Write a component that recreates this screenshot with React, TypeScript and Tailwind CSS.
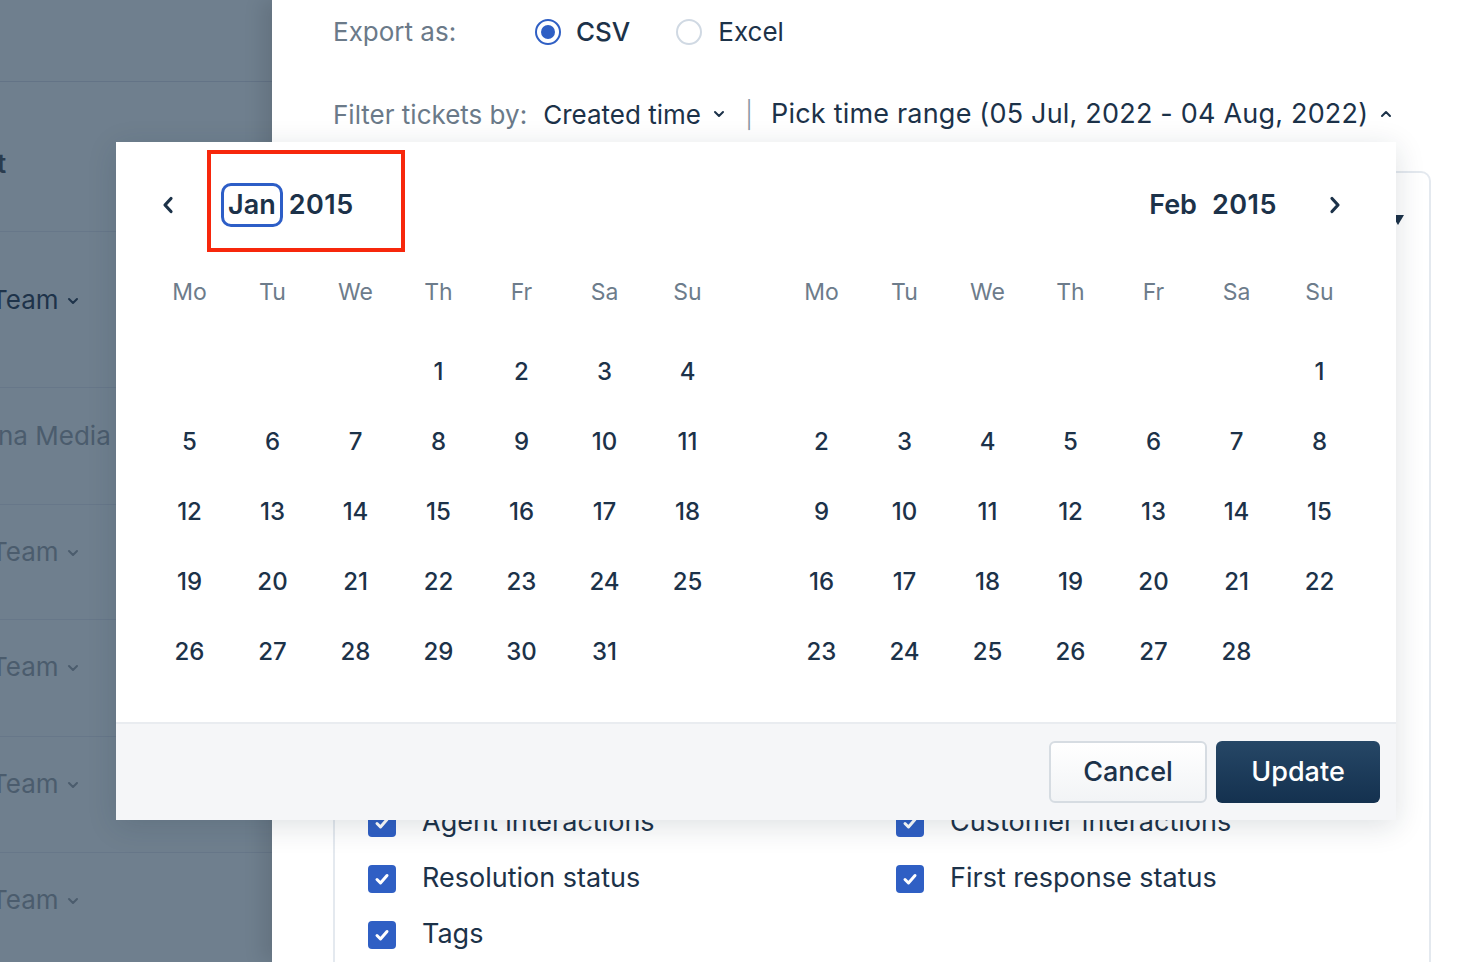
import React from 'react';

const janDays: (number | null)[] = [null, null, null, ...Array.from({ length: 31 }, (_, i) => i + 1)];
const febDays: (number | null)[] = [null, null, null, null, null, null, ...Array.from({ length: 28 }, (_, i) => i + 1)];
const weekdays = ['Mo', 'Tu', 'We', 'Th', 'Fr', 'Sa', 'Su'];

const ChevronLeft = () => (
  <svg width="12" height="18" viewBox="0 0 12 18" fill="none">
    <path d="M9 2.5 L3 9 L9 15.5" stroke="#1c3249" strokeWidth="3.2" strokeLinecap="round" strokeLinejoin="round" />
  </svg>
);

const ChevronRight = () => (
  <svg width="12" height="18" viewBox="0 0 12 18" fill="none">
    <path d="M3 2.5 L9 9 L3 15.5" stroke="#1c3249" strokeWidth="3.2" strokeLinecap="round" strokeLinejoin="round" />
  </svg>
);

const SmallChevron = ({ up = false, color = '#1c3249' }: { up?: boolean; color?: string }) => (
  <svg width="12" height="8" viewBox="0 0 12 8" fill="none">
    <path d={up ? 'M2 6 L6 2 L10 6' : 'M2 2 L6 6 L10 2'} stroke={color} strokeWidth="2" strokeLinecap="round" strokeLinejoin="round" />
  </svg>
);

const Checkbox = () => (
  <div className="flex h-[28px] w-[28px] items-center justify-center rounded-[4px] bg-[#2f5fc4]">
    <svg width="16" height="14" viewBox="0 0 16 14" fill="none">
      <path d="M3 7.5 L6.5 11 L13 3.5" stroke="white" strokeWidth="3" strokeLinecap="round" strokeLinejoin="round" />
    </svg>
  </div>
);

const MonthGrid = ({ days }: { days: (number | null)[] }) => (
  <div className="w-[581px]">
    <div className="mt-[48px] grid h-[34px] grid-cols-7 items-center">
      {weekdays.map((d) => (
        <div key={d} className="text-center text-[23px] text-[#6d7c8b]">{d}</div>
      ))}
    </div>
    <div className="mt-[28px] grid grid-cols-7">
      {days.map((d, i) => (
        <div key={i} className="flex h-[70px] items-center justify-center text-[24px] font-medium text-[#1c3249]">
          {d ?? ''}
        </div>
      ))}
    </div>
  </div>
);

export default function App() {
  return (
    <div className="relative flex h-[962px] w-[1472px] overflow-hidden bg-white font-['Inter',sans-serif]">
      {/* dimmed page on the left */}
      <div className="flex w-[272px] shrink-0 flex-col overflow-hidden bg-[#6f7f8e] text-[26px]">
        <div className="h-[82px] border-b border-[#637386]" />
        <div className="h-[150px] border-b border-[#677789] pt-[65px] font-semibold leading-[34px] text-[#2a3c4f]">
          <span className="-ml-[3px]">t</span>
        </div>
        <div className="flex h-[156px] items-start gap-2 border-b border-[#677789] pt-[51px] leading-[34px] text-[#1e334a]">
          <span className="-ml-[9px]">Team</span>
          <span className="mt-[14px]"><SmallChevron color="#1e334a" /></span>
        </div>
        <div className="h-[117px] border-b border-[#677789] pt-[31px] leading-[34px] text-[#4b5c6d]">
          <span className="-ml-[2px]">na Media</span>
        </div>
        {[115, 117, 116, 109].map((h, i) => (
          <div
            key={i}
            style={{ height: h }}
            className={`flex items-start gap-2 pt-[30px] leading-[34px] text-[#4b5c6d] ${i < 3 ? 'border-b border-[#677789]' : ''}`}
          >
            <span className="-ml-[9px]">Team</span>
            <span className="mt-[14px]"><SmallChevron color="#4b5c6d" /></span>
          </div>
        ))}
      </div>

      {/* export panel */}
      <div className="flex flex-1 flex-col pl-[61px] shadow-[-10px_0_18px_rgba(0,0,0,0.10)]">
        <div className="mt-[12px] flex h-[44px] items-center text-[26px]">
          <span className="w-[202px] text-[#6b7a89]">Export as:</span>
          <div className="flex items-center gap-[15px]">
            <span className="flex h-[26px] w-[26px] items-center justify-center rounded-full border-2 border-[#2f5fc4] bg-white">
              <span className="h-[14px] w-[14px] rounded-full bg-[#2f5fc4]" />
            </span>
            <span className="font-medium text-[#1c3249]">CSV</span>
          </div>
          <div className="ml-[46px] flex items-center gap-[16px]">
            <span className="h-[26px] w-[26px] rounded-full border-2 border-[#d0d9e3] bg-white" />
            <span className="text-[#1c3249]">Excel</span>
          </div>
        </div>

        <div className="mt-[43px] flex h-[44px] items-center text-[26px]">
          <span className="text-[#6b7a89]">Filter tickets by:</span>
          <span className="ml-[16px] text-[#1c3249]">Created time</span>
          <span className="ml-[12px]"><SmallChevron /></span>
          <span className="ml-[20px] font-light text-[#8795a3]">|</span>
          <span className="ml-[18px] text-[27px] tracking-[0.2px] text-[#1c3249]">Pick time range (05 Jul, 2022 - 04 Aug, 2022)</span>
          <span className="ml-[12px]"><SmallChevron up /></span>
        </div>

        <div className="mt-[36px] mr-[41px] h-[900px] shrink-0 rounded-[10px] border-2 border-[#e4e9ef] bg-white pt-[42px]">
          <div className="flex h-[18px] justify-end pr-[25px]">
            <svg width="12" height="10" viewBox="0 0 12 10">
              <path d="M0 0 L12 0 L6 10 Z" fill="#1c3249" />
            </svg>
          </div>
          <div className="mt-[562px] grid grid-cols-[528px_1fr] pl-[33px] text-[27px] text-[#1c3249]">
            {[
              'Agent interactions',
              'Customer interactions',
              'Resolution status',
              'First response status',
              'Tags',
            ].map((t) => (
              <div key={t} className="flex h-[56px] items-center gap-[26px]">
                <Checkbox />
                <span>{t}</span>
              </div>
            ))}
          </div>
        </div>
      </div>

      {/* date range popup */}
      <div className="absolute left-[116px] top-[142px] z-10 flex h-[678px] w-[1280px] flex-col bg-white shadow-[0_6px_28px_rgba(20,40,60,0.14)]">
        <div className="flex flex-1 gap-[51px] pl-[32px]">
          <div className="flex flex-col">
            <div className="mt-[41px] flex h-[44px] items-center text-[27px] font-semibold text-[#1c3249]">
              <span className="ml-[14px]"><ChevronLeft /></span>
              <span className="ml-[47px] flex h-[44px] items-center rounded-[10px] border-[3px] border-[#2d5ec7] px-[4px]">Jan</span>
              <span className="ml-[6px] tracking-[0.5px]">2015</span>
            </div>
            <MonthGrid days={janDays} />
          </div>
          <div className="flex flex-col">
            <div className="mt-[41px] flex h-[44px] items-center justify-end text-[27px] font-semibold text-[#1c3249]">
              <span>Feb</span>
              <span className="ml-[15px] tracking-[0.5px]">2015</span>
              <span className="ml-[52px] mr-[20px]"><ChevronRight /></span>
            </div>
            <MonthGrid days={febDays} />
          </div>
        </div>

        <div className="flex h-[98px] items-center justify-end gap-[9px] border-t-2 border-[#e9ecf0] bg-[#f5f6f8] pr-[16px]">
          <button className="h-[62px] w-[158px] rounded-[6px] border-2 border-[#d6dce2] bg-gradient-to-b from-white to-[#f2f4f6] text-[27px] font-medium text-[#1c3249]">
            Cancel
          </button>
          <button className="h-[62px] w-[164px] rounded-[6px] bg-gradient-to-b from-[#264766] to-[#14314f] text-[27px] font-medium text-white">
            Update
          </button>
        </div>

        {/* annotation box */}
        <div className="absolute left-[91px] top-[8px] h-[102px] w-[198px] border-[4px] border-[#f7270c]" />
      </div>
    </div>
  );
}
